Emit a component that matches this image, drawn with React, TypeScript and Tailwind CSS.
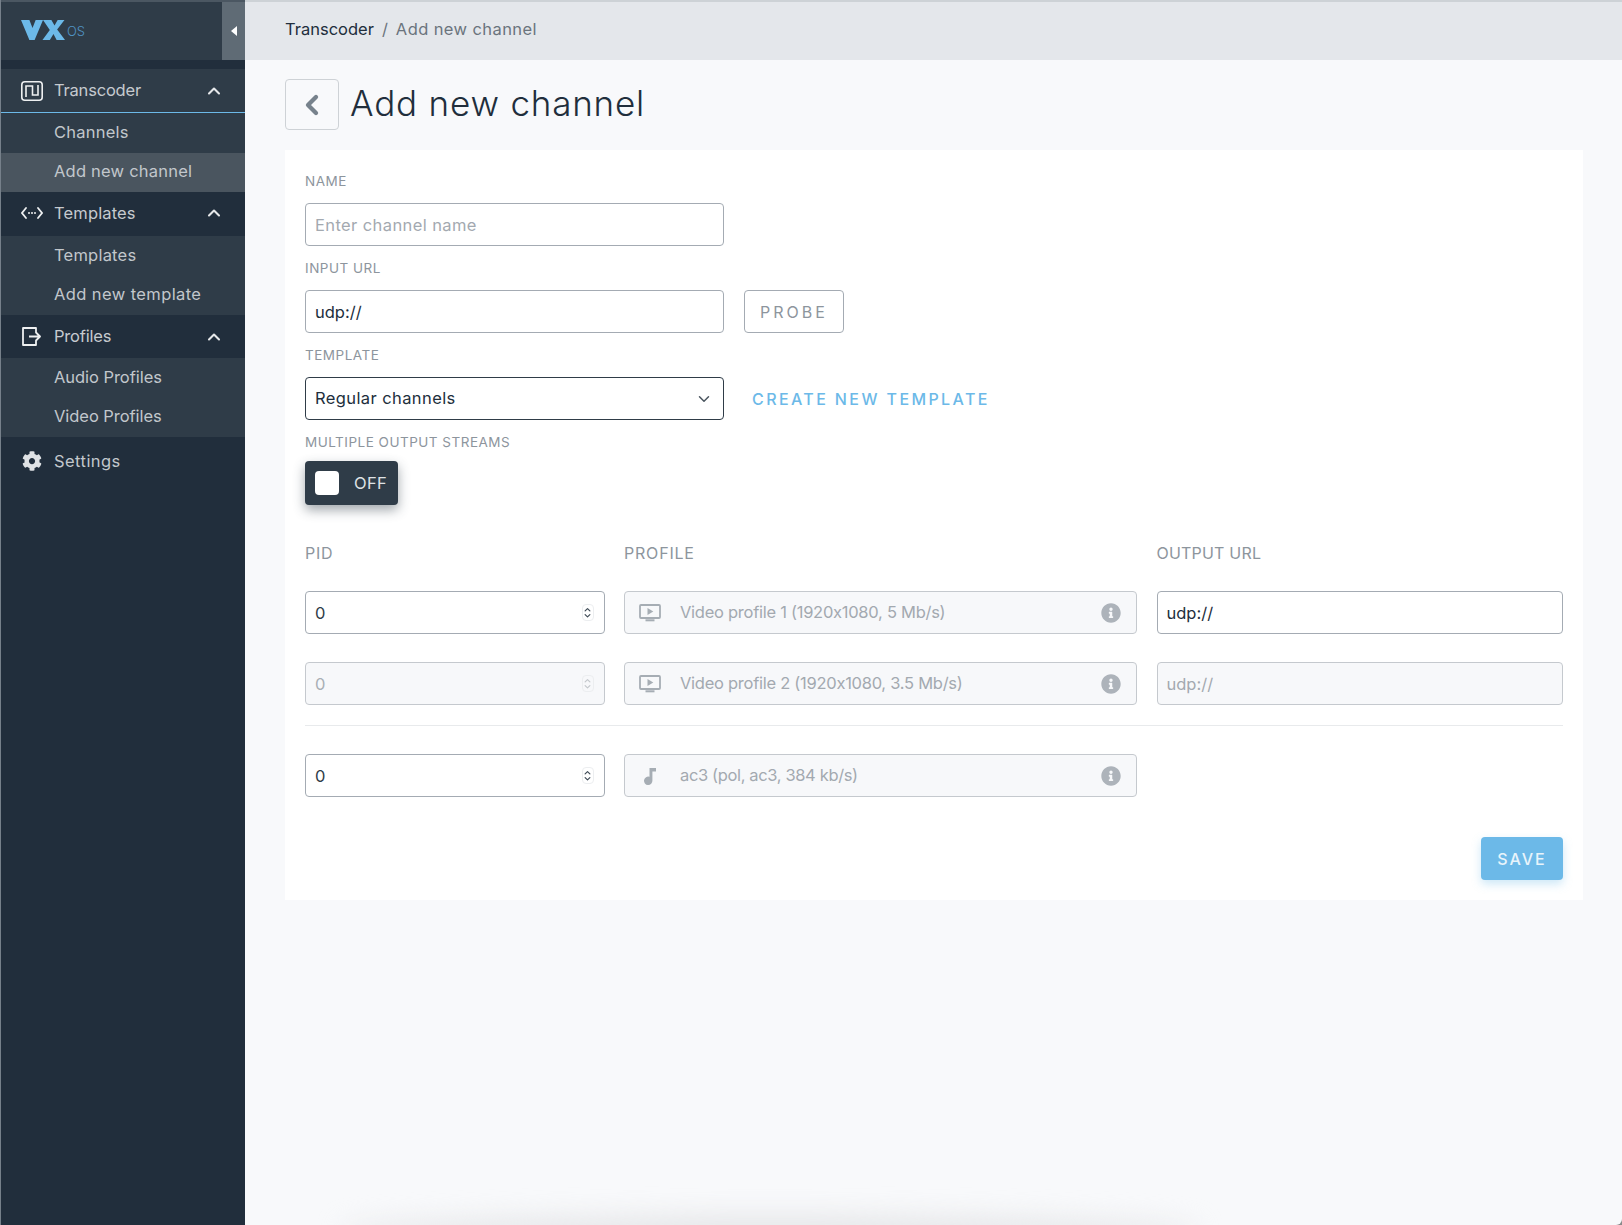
import React from "react";
import { FaCog, FaInfoCircle } from "react-icons/fa";
import { ChevronUp, ChevronDown, ChevronLeft } from "lucide-react";

function Chevron() {
  return <ChevronUp className="ml-auto mr-[21px] text-[#e6e8ea]" size={20} strokeWidth={2.5} />;
}

function NavHead({ icon, label, active, tall, tight }: { icon: React.ReactNode; label: string; active?: boolean; tall?: boolean; tight?: boolean }) {
  return (
    <div className={`flex items-center ${active ? "h-[44px] bg-[#2f3c48] border-b border-[#6cb9e8]" : tall ? "h-[44px] bg-[#212e3c] pb-[2px]" : "h-[43px] bg-[#212e3c]"}`}>
      <div className="w-[53px] flex justify-center pl-2 shrink-0">{icon}</div>
      <span className={`text-[16.5px] text-[#c6cacf] ${tight ? "tracking-[-0.2px]" : "tracking-[0.15px]"}`}>{label}</span>
      <Chevron />
    </div>
  );
}

function NavItem({ label, active, short, tight, wide }: { label: string; active?: boolean; short?: boolean; tight?: boolean; wide?: boolean }) {
  return (
    <div className={`flex items-center pl-[53px] pb-[2px] text-[16.5px] text-[#c2c7cc] ${short ? "h-[39px]" : "h-[40px]"} ${tight ? "tracking-[-0.05px]" : wide ? "tracking-[0.4px]" : "tracking-[0.22px]"} ${active ? "bg-[#4a555f]" : "bg-[#2f3c48]"}`}>
      {label}
    </div>
  );
}

function Label({ children }: { children: React.ReactNode }) {
  return <div className="h-5 leading-5 text-[13.5px] text-[#8d959d] tracking-[0.5px] uppercase">{children}</div>;
}

function Spinner({ disabled }: { disabled?: boolean }) {
  return (
    <div className={`absolute right-[11px] top-[13px] w-[12px] h-[17px] rounded-[4px] border border-[#eceef0] flex flex-col items-center justify-center ${disabled ? "text-[#c4c8cc]" : "text-[#3f4b56]"}`}>
      <ChevronUp size={11} strokeWidth={3} className="-mb-[2px]" />
      <ChevronDown size={11} strokeWidth={3} className="-mt-[2px]" />
    </div>
  );
}

function Pid({ disabled }: { disabled?: boolean }) {
  return (
    <div className="relative">
      <input
        readOnly
        disabled={disabled}
        value="0"
        className={`w-full h-[43px] rounded-[4px] border px-[9px] text-[16.5px] outline-none ${disabled ? "bg-[#f7f8fa] border-[#c5c9ce] text-[#a9afb5]" : "bg-white border-[#a4abb3] text-[#2f3c48]"}`}
      />
      <Spinner disabled={disabled} />
    </div>
  );
}

function VideoIcon() {
  return (
    <svg width="22" height="18" viewBox="0 0 22 18" fill="none" className="text-[#a6adb4]">
      <rect x="1" y="1" width="20" height="13" rx="1" stroke="currentColor" strokeWidth="1.8" />
      <path d="M8.500 4v7l5.800-3.500z" fill="currentColor" />
      <rect x="6.500" y="15.300" width="9" height="2" fill="currentColor" />
    </svg>
  );
}

function NoteIcon() {
  return (
    <svg width="14" height="18" viewBox="0 0 14 18" fill="none" className="text-[#a6adb4]">
      <path d="M6.500 1h6.500v3.400H9.400V13.500A4.200 4.200 0 1 1 6.500 9.800z" fill="currentColor" />
    </svg>
  );
}

function Profile({ icon, text, note }: { icon: React.ReactNode; text: string; note?: boolean }) {
  return (
    <div className="flex items-center h-[43px] rounded-[4px] border border-[#c5c9ce] bg-[#f7f8fa]">
      <div className={`w-[55px] flex justify-center shrink-0 ${note ? "pr-[5px]" : "pr-[6px]"}`}>{icon}</div>
      <span className={`text-[16.5px] text-[#a3a9b0] [font-feature-settings:'calt'_0] ${note ? "tracking-[-0.36px]" : "tracking-[-0.27px]"}`}>{text}</span>
      <FaInfoCircle size={20} className="ml-auto mr-[15px] text-[#adb3ba]" />
    </div>
  );
}

function Output({ disabled }: { disabled?: boolean }) {
  return (
    <input
      readOnly
      disabled={disabled}
      value="udp://"
      className={`w-full h-[43px] rounded-[4px] border px-[9px] text-[16.5px] outline-none ${disabled ? "bg-[#f7f8fa] border-[#c5c9ce] text-[#a3a9b0]" : "bg-white border-[#a4abb3] text-[#212e3c]"}`}
    />
  );
}

export default function App() {
  return (
    <div className="h-[1225px] w-[1622px] bg-[#8a8a8a]">
      <div className="relative flex h-[1225px] w-[1622px] overflow-hidden rounded-br-[6px] bg-[#f8f9fb] font-['Inter','Liberation_Sans',sans-serif]">
        <aside className="w-[245px] shrink-0 bg-[#212e3c] border-l border-[#76808a]">
          <div className="flex h-[60px] items-stretch bg-[#2f3c48] border-t-2 border-[#4b5762]">
            <div className="flex items-center pl-5 pb-[3px]">
              <svg width="44" height="20" viewBox="0 0 42 20" preserveAspectRatio="none" aria-label="VX logo">
                <path d="M0 0h8l3 8 3-8h7l-8 20H8z" fill="#6cb9e8" />
                <path d="M21 0h8l3 5.500L35 0h6.500l-7 9.500L42 20h-8l-3-6-3.500 6h-7l7-10z" fill="#6cb9e8" />
              </svg>
              <span className="ml-[2px] mt-[3px] text-[13px] font-light text-[#4f93c4] leading-none">OS</span>
            </div>
            <div className="ml-auto flex w-[23px] items-center justify-center bg-[#5f6b75]">
              <svg width="6" height="10" viewBox="0 0 6 10"><path d="M6 0v10L0 5z" fill="#fff" /></svg>
            </div>
          </div>
          <div className="mt-[9px]">
            <NavHead
              active
              tight
              label="Transcoder"
              icon={
                <svg width="22" height="20" viewBox="0 0 22 20" fill="none" stroke="#eef0f1" strokeWidth="1.6">
                  <rect x="0.800" y="0.800" width="20.400" height="18.400" rx="3" />
                  <path d="M5 16V5h6.500v9H17V4" />
                </svg>
              }
            />
            <NavItem label="Channels" />
            <NavItem label="Add new channel" active short />
            <NavHead
              tall
              label="Templates"
              icon={
                <svg width="22" height="12" viewBox="0 0 22 12" fill="none" stroke="#eef0f1" strokeWidth="1.8" strokeLinecap="round">
                  <path d="M5 1 1 6l4 5M17 1l4 5-4 5" />
                  <path d="M8 6h.01M11 6h.01M14 6h.01" strokeWidth="2" />
                </svg>
              }
            />
            <NavItem label="Templates" />
            <NavItem label="Add new template" short wide />
            <NavHead
              tight
              label="Profiles"
              icon={
                <svg width="19" height="19" viewBox="0 0 19 19" fill="none" stroke="#eef0f1" strokeWidth="1.8" strokeLinejoin="round">
                  <path d="M14 5V1H1v17h13v-4M7 9.500h11M13.500 5l4.500 4.500-4.500 4.500" />
                </svg>
              }
            />
            <NavItem label="Audio Profiles" tight />
            <NavItem label="Video Profiles" short tight />
            <div className="flex h-[46px] items-center pt-[2px]">
              <div className="w-[53px] flex justify-center pl-2 shrink-0">
                <FaCog size={20} className="text-[#dfe2e5]" />
              </div>
              <span className="text-[16.5px] tracking-[0.45px] text-[#c2c7cc]">Settings</span>
            </div>
          </div>
        </aside>

        <main className="flex-1 flex flex-col min-w-0">
          <div className="flex h-[60px] items-center bg-[#e4e7eb] border-t-2 border-[#cdd2d6] pl-10 pb-1 text-[16.5px]">
            <span className="text-[#212e3c]">Transcoder</span>
            <span className="mx-2 text-[#6b747d]">/</span>
            <span className="tracking-[0.4px] text-[#6b747d]">Add new channel</span>
          </div>

          <div className="pl-10 pr-[39px]">
            <div className="flex items-center pt-[19px]">
              <button className="flex h-[51px] w-[54px] items-center justify-center rounded-[4px] border border-[#ced2d6] text-[#77828c]">
                <ChevronLeft size={32} strokeWidth={3.2} />
              </button>
              <h1 className="ml-[11px] text-[35px] leading-[48px] -mt-[3px] font-light text-[#212e3c] tracking-[0.8px]">Add new channel</h1>
            </div>

            <form className="mt-5 bg-white px-5 pt-[21px] pb-5">
              <Label>Name</Label>
              <input
                placeholder="Enter channel name"
                className="mt-3 block w-[419px] h-[43px] rounded-[4px] border border-[#a4abb3] px-[9px] text-[16.5px] tracking-[0.4px] text-[#212e3c] placeholder:text-[#a3a9b0] outline-none"
              />
              <div className="mt-3 mb-3"><Label>Input URL</Label></div>
              <div className="flex items-center gap-5">
                <input
                  readOnly
                  value="udp://"
                  className="block w-[419px] h-[43px] rounded-[4px] border border-[#a4abb3] px-[9px] text-[16.5px] text-[#212e3c] outline-none"
                />
                <button type="button" className="h-[43px] w-[100px] rounded-[4px] border border-[#a4abb3] text-[16px] tracking-[3px] text-[#8d959d]">
                  PROBE
                </button>
              </div>
              <div className="mt-3 mb-3"><Label>Template</Label></div>
              <div className="flex items-center">
                <div className="flex h-[43px] w-[419px] items-center rounded-[4px] border border-[#2f3c48] pl-[9px] pr-[10px] text-[16.5px] tracking-[0.4px] text-[#212e3c]">
                  Regular channels
                  <ChevronDown size={18} strokeWidth={2} className="ml-auto text-[#4a555f]" />
                </div>
                <a className="ml-7 text-[16px] font-medium tracking-[2.4px] text-[#6cb9e8]">CREATE NEW TEMPLATE</a>
              </div>
              <div className="mt-3 mb-[9px]"><Label>Multiple output streams</Label></div>
              <div className="flex h-11 w-[93px] items-center rounded-[4px] bg-[#2f3c48] pl-[10px] shadow-[0_5px_12px_rgba(47,60,72,0.45)]">
                <div className="h-6 w-6 rounded-[4px] bg-white" />
                <span className="ml-[15px] text-[16.5px] tracking-[0.3px] text-[#dfe2e5]">OFF</span>
              </div>

              <div className="mt-[38px] grid grid-cols-[299.5px_513px_1fr] gap-x-[19.5px]">
                <div className="h-5 leading-5 text-[16px] tracking-[0.8px] text-[#8d959d]">PID</div>
                <div className="h-5 leading-5 text-[16px] tracking-[0.8px] text-[#8d959d]">PROFILE</div>
                <div className="h-5 leading-5 text-[16px] tracking-[0.2px] text-[#8d959d]">OUTPUT URL</div>
              </div>

              <div className="mt-7 grid grid-cols-[299.5px_513px_1fr] gap-x-[19.5px]">
                <Pid />
                <Profile icon={<VideoIcon />} text="Video profile 1 (1920x1080, 5 Mb/s)" />
                <Output />
              </div>
              <div className="mt-7 grid grid-cols-[299.5px_513px_1fr] gap-x-[19.5px]">
                <Pid disabled />
                <Profile icon={<VideoIcon />} text="Video profile 2 (1920x1080, 3.5 Mb/s)" />
                <Output disabled />
              </div>
              <hr className="mt-5 border-t border-[#e8eaec]" />
              <div className="mt-7 grid grid-cols-[299.5px_513px_1fr] gap-x-[19.5px]">
                <Pid />
                <Profile note icon={<NoteIcon />} text="ac3 (pol, ac3, 384 kb/s)" />
              </div>

              <div className="mt-10 flex justify-end">
                <button type="button" className="h-[43px] w-[82px] rounded-[4px] bg-[#6cb9e8] text-[16px] font-medium tracking-[2px] text-[#e8f4fb] shadow-[0_4px_10px_rgba(108,185,232,0.35)]">
                  SAVE
                </button>
              </div>
            </form>
          </div>
        </main>
        <div className="absolute bottom-[-20px] left-[340px] h-[30px] w-[860px] rounded-[50%] bg-[#e6e7e9] blur-[12px]" />
      </div>
    </div>
  );
}
